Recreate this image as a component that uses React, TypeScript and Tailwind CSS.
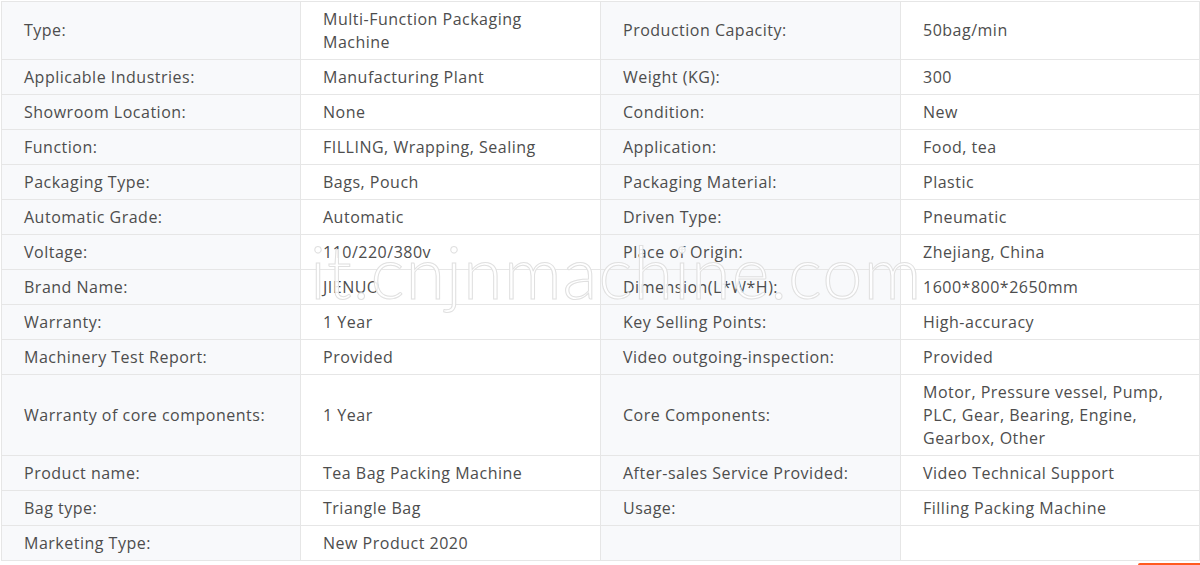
const rows: [string, string, string, string][] = [
  ["Type:", "Multi-Function Packaging Machine", "Production Capacity:", "50bag/min"],
  ["Applicable Industries:", "Manufacturing Plant", "Weight (KG):", "300"],
  ["Showroom Location:", "None", "Condition:", "New"],
  ["Function:", "FILLING, Wrapping, Sealing", "Application:", "Food, tea"],
  ["Packaging Type:", "Bags, Pouch", "Packaging Material:", "Plastic"],
  ["Automatic Grade:", "Automatic", "Driven Type:", "Pneumatic"],
  ["Voltage:", "110/220/380v", "Place of Origin:", "Zhejiang, China"],
  ["Brand Name:", "JIENUO", "Dimension(L*W*H):", "1600*800*2650mm"],
  ["Warranty:", "1 Year", "Key Selling Points:", "High-accuracy"],
  ["Machinery Test Report:", "Provided", "Video outgoing-inspection:", "Provided"],
  ["Warranty of core components:", "1 Year", "Core Components:", "Motor, Pressure vessel, Pump, PLC, Gear, Bearing, Engine, Gearbox, Other"],
  ["Product name:", "Tea Bag Packing Machine", "After-sales Service Provided:", "Video Technical Support"],
  ["Bag type:", "Triangle Bag", "Usage:", "Filling Packing Machine"],
  ["Marketing Type:", "New Product 2020", "", ""],
];

const labelCell = "border border-[#e6e6e6] bg-[#f8f9fb] px-[22px] py-[5.5px] align-middle";
const valueCell = "border border-[#e6e6e6] bg-white px-[22px] py-[5.5px] align-middle";

export default function App() {
  return (
    <div className="relative w-[1200px] h-[565px] overflow-hidden bg-white font-['Open_Sans',sans-serif] text-[16px] tracking-[0.5px] leading-[23px] text-[#4d4d4d]">
      <table className="w-[1198px] table-fixed border-collapse mt-px ml-px">
        <colgroup>
          <col className="w-[299px]" />
          <col className="w-[300px]" />
          <col className="w-[300px]" />
          <col className="w-[299px]" />
        </colgroup>
        <tbody>
          {rows.map((r, i) => (
            <tr key={i}>
              <td className={labelCell}>{r[0]}</td>
              <td className={valueCell}>{r[1]}</td>
              <td className={labelCell}>{r[2]}</td>
              <td className={valueCell}>{r[3]}</td>
            </tr>
          ))}
        </tbody>
      </table>

      {/* watermark */}
      <div className="absolute left-[310px] top-[235px] font-['Lato',sans-serif] font-light text-[72px] leading-none tracking-[1px] text-white/90 [-webkit-text-stroke:1px_#e0e0e0] pointer-events-none">
        it.cnjnmachine.com
      </div>

      <div className="absolute right-0 bottom-0 w-[62px] h-[2px] rounded-tl-md bg-[#ff5a1f]" />
    </div>
  );
}
